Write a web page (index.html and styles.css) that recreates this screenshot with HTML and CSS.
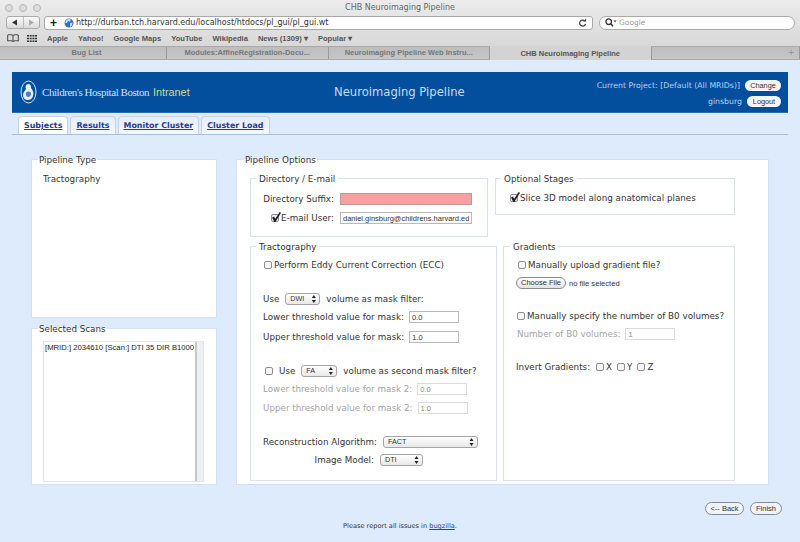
FILE: index.html
```html
<!DOCTYPE html>
<html lang="en">
<head>
<meta charset="utf-8">
<title>CHB Neuroimaging Pipeline</title>
<link rel="stylesheet" href="styles.css">
</head>
<body>
<header class="chrome">
  <div class="titlebar">
    <div class="lights"><i></i><i></i><i></i></div>
    <div class="wintitle">CHB Neuroimaging Pipeline</div>
  </div>
  <div class="toolbar">
    <div class="navbtns">
      <span class="nav"><svg width="7" height="7" viewBox="0 0 7 7"><path d="M6 .5v6L1 3.5z" fill="#333"/></svg></span>
      <span class="nav"><svg width="7" height="7" viewBox="0 0 7 7"><path d="M1 .5v6l5-3z" fill="#aaa"/></svg></span>
    </div>
    <div class="urlbar">
      <span class="plus">+</span>
      <svg class="globe" width="10" height="10" viewBox="0 0 10 10"><circle cx="5" cy="5" r="4.500" fill="#2f6fc4"/><path d="M2 2.500c1.500-1.500 3.500-1.800 5-.8L6 3.500 4 3 3 5 1 5zM6 5l2.500-.5L8 7.500 6 9z" fill="#cfe2f8"/></svg>
      <span class="url">http://durban.tch.harvard.edu/localhost/htdocs/pl_gui/pl_gui.wt</span>
      <svg class="reload" width="9" height="10" viewBox="0 0 9 10"><path d="M7 3.200A3 3 0 1 0 7.500 6" fill="none" stroke="#444" stroke-width="1.300"/><path d="M5 3.500h3.200V.5z" fill="#444"/></svg>
    </div>
    <div class="search">
      <svg width="12" height="9" viewBox="0 0 12 9"><circle cx="3.700" cy="3.700" r="2.800" fill="none" stroke="#333" stroke-width="1.300"/><path d="M5.800 5.800 8 8.300" stroke="#333" stroke-width="1.500"/><path d="M8.500 2.500h3L10 4.500z" fill="#444"/></svg>
      <span>Google</span>
    </div>
  </div>
  <nav class="bookmarks">
    <svg class="book" width="12" height="8" viewBox="0 0 12 8"><path d="M6 1.500C5 .5 2.500.5.700 1v6C2.500 6.500 5 6.500 6 7.500c1-1 3.500-1 5.300-.5V1C9.500.5 7 .5 6 1.500zM6 1.500v6" fill="none" stroke="#444"/></svg>
    <svg class="grid9" width="10" height="7" viewBox="0 0 10 7"><path d="M0 0h2v1.500H0zM2.700 0h2v1.500h-2zM5.400 0h2v1.500h-2zM8 0h2v1.500H8zM0 2.700h2v1.500H0zM2.700 2.700h2v1.500h-2zM5.400 2.700h2v1.500h-2zM8 2.700h2v1.500H8zM0 5.400h2V7H0zM2.700 5.400h2V7h-2zM5.400 5.400h2V7h-2zM8 5.400h2V7H8z" fill="#333"/></svg>
    <a class="mk">Apple</a><a class="mk">Yahoo!</a><a class="mk">Google Maps</a><a class="mk">YouTube</a><a class="mk">Wikipedia</a><a class="mk">News (1309) ▾</a><a class="mk">Popular ▾</a>
  </nav>
  <div class="tabstrip">
    <div class="btab">Bug List</div>
    <div class="btab">Modules:AffineRegistration-Docu...</div>
    <div class="btab">Neuroimaging Pipeline Web Instru...</div>
    <div class="btab on">CHB Neuroimaging Pipeline</div>
    <div class="btab rest">+</div>
  </div>
</header>

<div class="page">
  <div class="banner">
    <div class="logo">
      <svg width="17" height="24" viewBox="0 0 17 24"><ellipse cx="8.500" cy="12" rx="7.500" ry="11" fill="none" stroke="#d9e8f8" stroke-width="1"/><path d="M8 4c2.500 0 3.500 2 3 4 2 2 3 5 2 8-1 3-3 4-5 4-3 0-5-2-5-5 0-3 2-4 3-6C5 7 6 4 8 4z" fill="#e6eff9"/><path d="M6 13c1-2 4-2 5 0 .5 2-1 4-3 4-1.500 0-2.500-2-2-4z" fill="#4d7fb8"/></svg>
      <span class="hosp">Children's Hospital Boston</span>
      <span class="intra">Intranet</span>
    </div>
    <h1 class="apptitle">Neuroimaging Pipeline</h1>
    <div class="acct">
      <div class="acctrow"><span>Current Project: [Default (All MRIDs)]</span><span class="pill w36">Change</span></div>
      <div class="acctrow"><span>ginsburg</span><span class="pill w34">Logout</span></div>
    </div>
  </div>

  <div class="tabs">
    <a class="tab on">Subjects</a><a class="tab">Results</a><a class="tab">Monitor Cluster</a><a class="tab">Cluster Load</a>
  </div>

  <main class="main">
    <div class="leftcol">
      <fieldset class="panel">
        <legend>Pipeline Type</legend>
        <div class="ptype">Tractography</div>
      </fieldset>
      <fieldset class="panel">
        <legend>Selected Scans</legend>
        <div class="scans">
          <div class="scanlist">[MRID:] 2034610 [Scan:] DTI 35 DIR B1000 M</div>
          <div class="scroll"></div>
        </div>
      </fieldset>
    </div>

    <fieldset class="panel options">
      <legend>Pipeline Options</legend>
      <div class="optrow first">
        <fieldset class="box dir">
          <legend>Directory / E-mail</legend>
          <div class="dirgrid">
            <label>Directory Suffix:</label><input class="txt bad" type="text">
            <label><input class="ck" type="checkbox" checked>E-mail User:</label><input class="txt" type="text" value="daniel.ginsburg@childrens.harvard.edu">
          </div>
        </fieldset>
        <fieldset class="box stages">
          <legend>Optional Stages</legend>
          <div class="row stagerow"><input class="ck" type="checkbox" checked>Slice 3D model along anatomical planes</div>
        </fieldset>
      </div>
      <div class="optrow second">
        <fieldset class="box tract">
          <legend>Tractography</legend>
          <div class="row ecc"><input class="ck" type="checkbox">Perform Eddy Current Correction (ECC)</div>
          <div class="row sec">Use<span class="sel w32">DWI</span>volume as mask filter:</div>
          <div class="row">Lower threshold value for mask:<input class="txt num" type="text" value="0.0"></div>
          <div class="row r8">Upper threshold value for mask:<input class="txt num" type="text" value="1.0"></div>
          <div class="row sec use2"><input class="ck" type="checkbox"><span class="uselbl">Use</span><span class="sel w36b">FA</span>volume as second mask filter?</div>
          <div class="row off">Lower threshold value for mask 2:<input class="txt num" type="text" value="0.0" disabled></div>
          <div class="row r7 off">Upper threshold value for mask 2:<input class="txt num" type="text" value="1.0" disabled></div>
          <div class="row sec">Reconstruction Algorithm:<span class="sel wide">FACT</span></div>
          <div class="row"><span class="rlabel">Image Model:</span><span class="sel w43">DTI</span></div>
        </fieldset>
        <fieldset class="box grad">
          <legend>Gradients</legend>
          <div class="row ecc"><input class="ck" type="checkbox">Manually upload gradient file?</div>
          <div class="row filerow"><span class="pill filebtn">Choose File</span><span class="nofile">no file selected</span></div>
          <div class="row sec2"><input class="ck" type="checkbox">Manually specify the number of B0 volumes?</div>
          <div class="row off">Number of B0 volumes:<input class="txt num" type="text" value="1" disabled></div>
          <div class="row sec3"><span>Invert Gradients:</span>
            <span class="xyz"><input class="ck" type="checkbox">X</span>
            <span class="xyz"><input class="ck" type="checkbox">Y</span>
            <span class="xyz"><input class="ck" type="checkbox">Z</span>
          </div>
        </fieldset>
      </div>
    </fieldset>
  </main>

  <div class="actions">
    <span class="pill act w39">&lt;-- Back</span>
    <span class="pill act w32b">Finish</span>
  </div>
  <footer class="foot">Please report all issues in <a>bugzilla</a>.</footer>
</div>
</body>
</html>
```
FILE: styles.css
```css
* { box-sizing: border-box; }
html, body { margin: 0; padding: 0; }
body {
  width: 800px; height: 542px; overflow: hidden;
  background: #deebfd;
  font-family: "DejaVu Sans", Verdana, sans-serif;
  font-size: 8.750px; color: #333;
}

/* Browser chrome */
.chrome { height: 60px; background: linear-gradient(#ececec, #d2d2d2); }
.titlebar { height: 15px; display: flex; align-items: center; position: relative; }
.lights { display: flex; gap: 6px; padding-left: 5px; }
.lights i { width: 8px; height: 8px; border-radius: 50%; background: #dcdcdc; border: 1px solid #b8b8b8; }
.wintitle { position: absolute; left: 0; right: 0; text-align: center; font: 8px "DejaVu Sans", sans-serif; color: #666; }
.toolbar { height: 15px; display: flex; align-items: center; padding: 0 5px 0 6px; }
.navbtns { display: flex; width: 34px; height: 13px; border: 1px solid #aaa; border-radius: 3px; background: linear-gradient(#fafafa, #d9d9d9); }
.nav { flex: 1; display: flex; align-items: center; justify-content: center; border-right: 1px solid #bbb; }
.nav:last-child { border-right: 0; }
.urlbar { margin-left: 4px; width: 549px; height: 14px; display: flex; align-items: center; background: #fff; border: 1px solid #a8a8a8; border-radius: 3px; }
.plus { width: 17px; text-align: center; font: bold 12px/12px "Liberation Sans", sans-serif; color: #222; }
.globe { margin-left: 2px; }
.url { margin-left: 2px; font: 8px "DejaVu Sans", sans-serif; color: #333; flex: 1; }
.reload { margin-right: 5px; }
.search { margin-left: 6px; width: 196px; height: 14px; display: flex; align-items: center; gap: 2px; background: #fff; border: 1px solid #aaa; border-radius: 7px; padding-left: 5px; font: 7.500px "DejaVu Sans", sans-serif; color: #999; }
.bookmarks { height: 16px; display: flex; align-items: center; padding-left: 7px; gap: 10px; font: bold 7.600px "Liberation Sans", sans-serif; color: #555; }
.grid9 { margin-left: -2px; }
.mk { white-space: nowrap; }
.tabstrip { height: 14px; display: flex; border-top: 1px solid #aaa; border-bottom: 1px solid #aaa; background: #b9b9b9; }
.btab { width: 161.500px; flex: none; text-align: center; font: bold 7.500px/12px "Liberation Sans", sans-serif; color: #777; background: linear-gradient(#bdbdbd, #c6c6c6); border-right: 1px solid #999; white-space: nowrap; }
.btab:first-child { width: 167px; padding-left: 7px; }
.btab.on { background: #d3d3d3; color: #555; border-top: 1px solid #d3d3d3; margin-top: -1px; height: 14px; line-height: 14px; }
.btab.rest { flex: 1; text-align: right; padding-right: 5px; font-size: 10px; font-weight: normal; color: #999; }

/* Page */
.page { padding: 12px 12px 0; }
.banner { height: 41px; background: #034f9e; display: flex; align-items: center; border-bottom: 1px solid #2a6cb0; }
.logo { display: flex; align-items: center; padding-left: 8px; width: 322px; flex: none; }
.hosp { margin-left: 5px; font: 11px "Liberation Serif", serif; color: #cfe0f3; letter-spacing: -.45px; white-space: nowrap; }
.intra { margin-left: 4px; font: 10.800px "Liberation Sans", sans-serif; color: #c9dc8e; }
.apptitle { margin: 0; font: 11.600px "DejaVu Sans", sans-serif; color: #c6dcf5; white-space: nowrap; }
.acct { margin: 2px 0 0 auto; padding-right: 7px; display: flex; flex-direction: column; gap: 5px; font-size: 7.800px; color: #b4d2f3; }
.acctrow { display: flex; justify-content: flex-end; align-items: center; gap: 5px; height: 11px; }
.pill { display: inline-block; text-align: center; border-radius: 7px; background: #f5f5f5; color: #333; font: 7.300px/11px "Liberation Sans", sans-serif; height: 11px; }
.w36 { width: 36px; }
.w34 { width: 34px; }

.tabs { height: 19px; margin-top: 3px; padding-left: 6px; display: flex; gap: 2px; border-bottom: 1px solid #a9bdd6; align-items: flex-end; }
.tab { height: 18px; padding: 0 5px; line-height: 18px; font-weight: bold; font-size: 7.950px; color: #2a3a8e; text-decoration: underline; background: linear-gradient(#e6eef9, #f3f7fd); border: 1px solid #c5d2e2; border-bottom: 0; border-radius: 4px 4px 0 0; }
.tab.on { background: #fff; }

.main { margin: 17px 19px 0; display: grid; grid-template-columns: 186px 533px; column-gap: 19px; height: 333px; }
.leftcol { display: grid; grid-template-rows: 166px 164px; row-gap: 3px; }
fieldset { margin: 0; min-width: 0; background: #fff; }
legend { padding: 2px 2px 0; font-size: 8.750px; line-height: 12px; color: #333; white-space: nowrap; }
.panel { border: 1px solid #d3e1f4; padding: 0 11px; height: 100%; }
.panel > legend { margin-left: -5px; padding-left: 1px; padding-right: 1px; }
.ptype { padding-top: 7px; line-height: 12px; }
.scans { display: flex; height: 141px; margin-top: 6px; border: 1px solid #e4e4e4; width: 161px; }
.scanlist { width: 153px; overflow: hidden; white-space: nowrap; font: 7.700px/11px "Liberation Sans", sans-serif; padding-left: 1px; color: #222; border-right: 2px solid #c8c8c8; }
.scroll { flex: 1; background: #eef0f4; }

.options { padding: 5px 13px 0; }
.options > legend { margin-left: -6px; }
.optrow { display: flex; align-items: flex-start; }
.first { gap: 7px; height: 66px; }
.second { gap: 6px; margin-top: 2px; }
.box { border: 1px solid #d8e2ee; padding: 0 12px; }
.box > legend { margin-left: -7px; padding-left: 3px; padding-right: 3px; }
.dir { width: 238px; height: 66px; }
.stages { width: 240px; height: 44px; }
.tract { width: 247px; height: 242px; }
.grad { width: 232px; height: 242px; }

.dirgrid { display: grid; grid-template-columns: 71px 132px; column-gap: 6px; row-gap: 7px; padding-top: 8px; }
.dirgrid label { display: flex; justify-content: flex-end; align-items: center; white-space: nowrap; }
.txt { height: 12px; padding: 0 2px; border: 1px solid #b9b9b9; background: #fff; font: 7.500px "Liberation Sans", sans-serif; color: #333; outline: 0; margin: 0; }
.dirgrid .txt { width: 132px; font-size: 7.500px; }
.bad { background: #f8a0a0; border-color: #b79c9c; }
.num { width: 50px; margin-left: 5px; }
.txt:disabled { border-color: #dcdcdc; color: #888; }

.ck { appearance: none; -webkit-appearance: none; flex: none; width: 8px; height: 8px; margin: 0 2px 0 0; border: 1px solid #8e8e8e; border-radius: 2px; background: #f6f6f6; position: relative; }
.ck:checked::after { content: ""; position: absolute; left: 0; top: -3px; width: 9px; height: 10px; background: #222; clip-path: polygon(0 55%, 22% 45%, 35% 68%, 85% 0, 100% 8%, 38% 100%, 25% 100%); }

.row { display: flex; align-items: center; height: 12px; margin-top: 6px; white-space: nowrap; }
.r8 { margin-top: 8px; }
.r7 { margin-top: 7px; }
.sec { margin-top: 22px; }
.ecc { margin-top: 6px; padding-left: 1px; }
.off { color: #a4a4a4; }
.use2 { padding-left: 2px; }
.uselbl { margin-left: 4px; }
.stagerow { margin-top: 7px; padding-left: 2px; }
.rlabel { width: 111px; text-align: right; }
.sel { display: inline-block; position: relative; height: 12px; margin: 0 6px; padding-left: 4px; border: 1px solid #a5a5a5; border-radius: 3px; background: linear-gradient(#fff, #e8e8e8); font: 7.200px/10px "Liberation Sans", sans-serif; color: #333; }
.sel::after { content: ""; position: absolute; right: 3px; top: 1px; width: 5px; height: 8px; background: #222; clip-path: path("M2.500 0L4.500 3H.5zM2.500 8L4.500 5H.5z"); }
.w32 { width: 35px; }
.w36b { width: 36px; }
.wide { width: 103px; }
.w43 { width: 43px; }

.grad { padding-left: 13px; }
.filerow { margin-left: -1px; margin-top: 6px; }
.filebtn { width: 50px; height: 12px; border: 1px solid #8a8a8a; background: linear-gradient(#fdfdfd, #e3e3e3); font-size: 7.500px; line-height: 10px; }
.nofile { margin-left: 3px; font: 7.600px "Liberation Sans", sans-serif; }
.sec2 { margin-top: 21px; }
.sec3 { margin-top: 21px; margin-left: -1px; }
.xyz { display: inline-flex; align-items: center; margin-right: 5px; }
.sec3 > span:first-child { margin-right: 6px; }

.actions { display: flex; justify-content: flex-end; gap: 6px; padding-right: 6px; margin-top: 17px; }
.act { height: 13px; line-height: 11px; border: 1px solid #7f8aa0; background: #f1f4fa; font-size: 7.500px; }
.w39 { width: 39px; }
.w32b { width: 32px; }
.foot { margin-top: 7px; text-align: center; font-size: 6.600px; color: #333; }
.foot a { color: #24429b; text-decoration: underline; }
```
